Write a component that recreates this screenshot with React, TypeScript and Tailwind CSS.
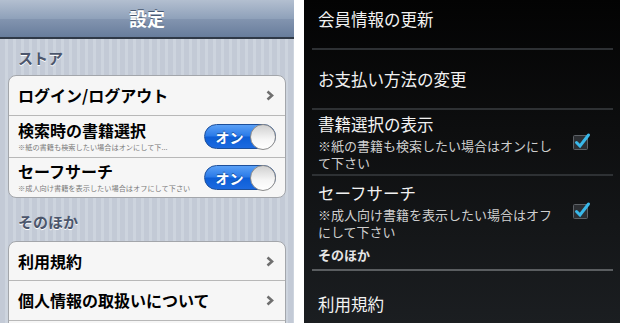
import React from "react";

const jp = "font-['Noto_Sans_CJK_JP','Noto_Sans',sans-serif]";

const Chevron = () => (
  <svg width="8" height="11" viewBox="0 0 8 11" className="shrink-0">
    <path d="M1.5 1.5 L6 5.5 L1.5 9.5" fill="none" stroke="#6f6f6f" strokeWidth="2.6" />
  </svg>
);

const Toggle = () => (
  <div className="flex items-center w-[72px] h-[25px] rounded-full border border-[#1d4f9a] bg-[linear-gradient(180deg,#5aa0f6_0%,#2a7ae8_48%,#0d5ed6_52%,#1c6ae0_100%)] shrink-0">
    <span className="flex-1 text-center text-white text-[14px] font-bold leading-none pl-[4px] [text-shadow:0_-1px_0_#1a4f9c]">
      オン
    </span>
    <div className="w-[26px] h-[26px] -mr-[1px] rounded-full border border-[#8a8a8a] bg-[linear-gradient(180deg,#d0d0d0_0%,#f6f6f6_60%,#ffffff_100%)]" />
  </div>
);

const Checkbox = () => (
  <svg width="20" height="20" viewBox="0 0 20 20" className="shrink-0">
    <rect x="1.5" y="4.5" width="14" height="14" rx="1" fill="#2c2f33" stroke="#5d6166" />
    <path d="M4.5 11.5 L8 15 L16.5 4" fill="none" stroke="#39b8ea" strokeWidth="3" strokeLinecap="round" />
  </svg>
);

const IosRow = ({ title, sub, h, chevron, toggle, last }: { title: string; sub?: string; h: string; chevron?: boolean; toggle?: boolean; last?: boolean }) => (
  <div className={`flex items-center shrink-0 pl-[9px] pr-[9px] ${h} ${last ? "" : "border-b border-[#b8b8b8]"}`}>
    <div className="flex-1 min-w-0 flex flex-col">
      <span className="text-[16px] font-bold leading-[19px] text-black">{title}</span>
      {sub && <span className="text-[7.2px] leading-[10px] text-[#7a7a7a] mt-[2px] whitespace-nowrap">{sub}</span>}
    </div>
    {chevron && <div className="pr-[2px]"><Chevron /></div>}
    {toggle && <Toggle />}
  </div>
);

const AndroidRow = ({ title, sub, h, divider = true, check }: { title: string; sub?: string; h: string; divider?: boolean; check?: boolean }) => (
  <div className="flex flex-col shrink-0">
    <div className={`flex items-center pl-[14px] ${h}`}>
      <div className="w-[254px] flex flex-col">
        <span className="text-[16.5px] leading-[24px] text-[#f2f2f2]">{title}</span>
        {sub && <span className="w-[240px] text-[13px] leading-[17px] text-[#cfcfcf] mt-[1px]">{sub}</span>}
      </div>
      {check && <Checkbox />}
    </div>
    {divider && <div className="ml-[8px] mr-[7px] h-[2px] bg-[#2e3134]" />}
  </div>
);

export default function App() {
  return (
    <div className={`flex w-[620px] h-[323px] overflow-hidden bg-white ${jp}`}>
      <div className="w-[294px] flex flex-col shrink-0 bg-[repeating-linear-gradient(90deg,#c3cad6_0px,#c3cad6_5px,#cdd4de_5px,#cdd4de_8px)]">
        <div className="h-[39px] shrink-0 flex items-center justify-center border-b-2 border-[#2f3947] bg-[linear-gradient(180deg,#b3bfd0_0%,#8fa1ba_50%,#8294af_52%,#687d9c_100%)]">
          <span className="text-white text-[18px] font-bold [text-shadow:0_-1px_0_#4a5a72]">設定</span>
        </div>
        <div className="px-[8px] flex flex-col shrink-0">
          <div className="pt-[9px] pb-[7px] pl-[10px] text-[15px] font-bold leading-[20px] text-[#4c566c] [text-shadow:0_1px_0_#ffffff]">ストア</div>
          <div className="rounded-[8px] border border-[#a3a6ab] bg-[#f6f6f6] overflow-hidden shrink-0">
            <IosRow title="ログイン/ログアウト" h="h-[40px]" chevron />
            <IosRow title="検索時の書籍選択" sub="※紙の書籍も検索したい場合はオンにして下..." h="h-[42px]" toggle />
            <IosRow title="セーフサーチ" sub="※成人向け書籍を表示したい場合はオフにして下さい" h="h-[39px]" toggle last />
          </div>
          <div className="pt-[14px] pb-[9px] pl-[10px] text-[15px] font-bold leading-[20px] text-[#4c566c] [text-shadow:0_1px_0_#ffffff]">そのほか</div>
          <div className="rounded-t-[8px] border border-[#a3a6ab] bg-[#f6f6f6] shrink-0">
            <IosRow title="利用規約" h="h-[39px]" chevron />
            <IosRow title="個人情報の取扱いについて" h="h-[40px]" chevron />
            <div className="h-[20px]" />
          </div>
        </div>
      </div>
      <div className="w-[10px] shrink-0 bg-white" />
      <div className="flex-1 flex flex-col bg-[linear-gradient(180deg,#030303_0%,#0d0e0f_40%,#1b1e21_100%)]">
        <AndroidRow title="会員情報の更新" h="h-[48px] pb-[10px]" />
        <AndroidRow title="お支払い方法の変更" h="h-[58px]" />
        <AndroidRow title="書籍選択の表示" sub="※紙の書籍も検索したい場合はオンにして下さい" h="h-[64px] pb-[2px]" check />
        <AndroidRow title="セーフサーチ" sub="※成人向け書籍を表示したい場合はオフにして下さい" h="h-[64px] pt-[4px]" check divider={false} />
        <div className="shrink-0 pl-[14px] pt-[6px] pb-[5px] text-[13px] font-bold leading-[18px] text-[#e6e6e6]">そのほか</div>
        <div className="shrink-0 ml-[8px] mr-[7px] h-[2px] bg-[#5a5d60]" />
        <AndroidRow title="利用規約" h="h-[58px] pt-[8px]" />
      </div>
    </div>
  );
}
